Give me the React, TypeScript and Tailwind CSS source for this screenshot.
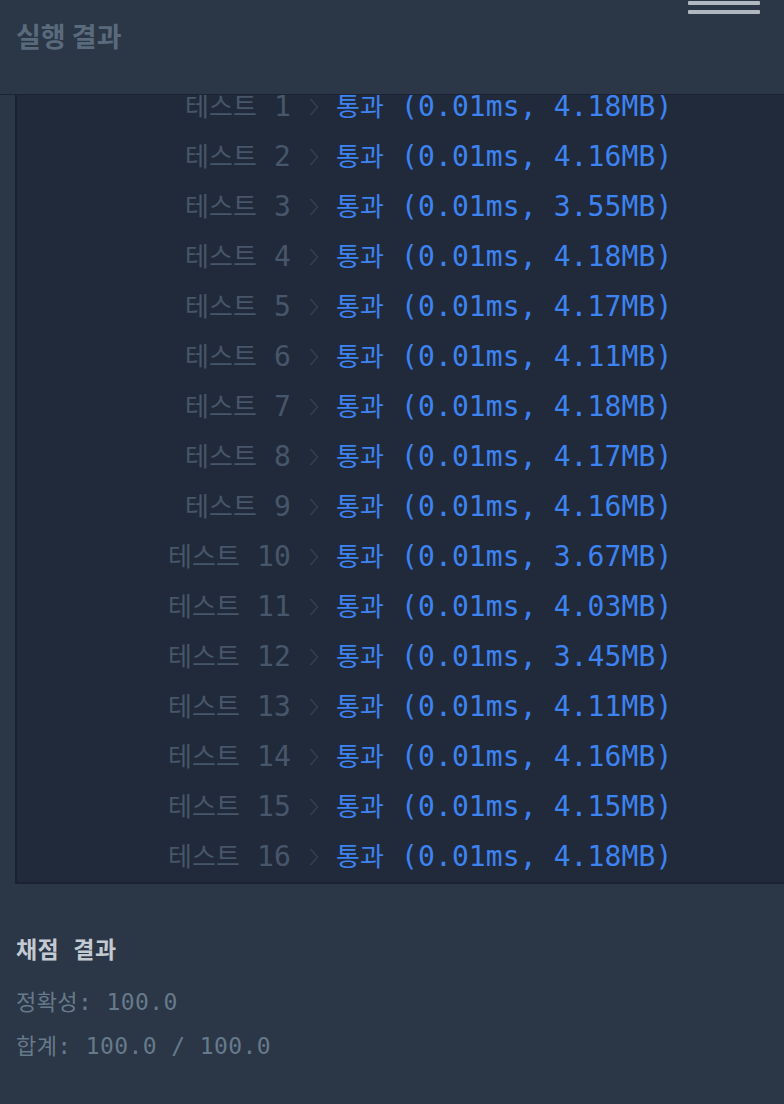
import React from "react";

const results = [
  { n: 1, ms: "0.01ms", mb: "4.18MB" },
  { n: 2, ms: "0.01ms", mb: "4.16MB" },
  { n: 3, ms: "0.01ms", mb: "3.55MB" },
  { n: 4, ms: "0.01ms", mb: "4.18MB" },
  { n: 5, ms: "0.01ms", mb: "4.17MB" },
  { n: 6, ms: "0.01ms", mb: "4.11MB" },
  { n: 7, ms: "0.01ms", mb: "4.18MB" },
  { n: 8, ms: "0.01ms", mb: "4.17MB" },
  { n: 9, ms: "0.01ms", mb: "4.16MB" },
  { n: 10, ms: "0.01ms", mb: "3.67MB" },
  { n: 11, ms: "0.01ms", mb: "4.03MB" },
  { n: 12, ms: "0.01ms", mb: "3.45MB" },
  { n: 13, ms: "0.01ms", mb: "4.11MB" },
  { n: 14, ms: "0.01ms", mb: "4.16MB" },
  { n: 15, ms: "0.01ms", mb: "4.15MB" },
  { n: 16, ms: "0.01ms", mb: "4.18MB" },
];

const mono = "font-['DejaVu_Sans_Mono','Noto_Sans_CJK_KR',monospace]";

function Chevron() {
  return (
    <svg width="12" height="20" viewBox="0 0 12 20" fill="none" className="shrink-0">
      <path d="M2.5 2 L9.5 10 L2.5 18" stroke="#35414f" strokeWidth="1.4" />
    </svg>
  );
}

export default function App() {
  return (
    <div className="w-[784px] h-[1104px] overflow-hidden bg-[#2b3646] flex flex-col">
      {/* header */}
      <div className="h-[95px] shrink-0 flex justify-between border-b border-[#1b2332]">
        <h2 className="pl-4 pt-[17px] text-[27px] font-bold text-[#5a6a7d] font-['Noto_Sans_CJK_KR',sans-serif] leading-[38px]">
          실행 결과
        </h2>
        <div className="flex flex-col gap-[5px] pt-[1px] pr-6">
          <div className="w-[72px] h-[4px] bg-[#aeb8be] rounded-[1px]" />
          <div className="w-[72px] h-[4px] bg-[#aeb8be] rounded-[1px]" />
        </div>
      </div>

      {/* result panel */}
      <div className="ml-[15px] h-[789px] shrink-0 overflow-hidden bg-[#212a3a] border-l-2 border-b-2 border-[#1a2231]">
        <div className={`-mt-[13px] ${mono} text-[28px] tracking-[0.1px]`}>
          {results.map((r) => (
            <div key={r.n} className="flex h-[50px] items-center">
              <div className="w-[274px] text-right text-[#47566a] whitespace-pre">
                <span className="text-[26px]">테스트</span> {r.n}
              </div>
              <div className="w-[45px] flex justify-center">
                <Chevron />
              </div>
              <div className="text-[#3d83f2] whitespace-pre">
                <span className="text-[26px]">통과</span> ({r.ms}, {r.mb})
              </div>
            </div>
          ))}
        </div>
      </div>

      {/* grading */}
      <div className={`pl-4 pt-[50px] ${mono} text-[23px] tracking-[0.4px]`}>
        <div className="text-[#c3cad2] font-bold leading-[32px] whitespace-pre">채점 결과</div>
        <div className="mt-[20px] text-[#667a8c] leading-[32px] whitespace-pre">
          <span className="text-[22px]">정확성</span>: 100.0
        </div>
        <div className="mt-[11px] text-[#667a8c] leading-[32px] whitespace-pre">
          <span className="text-[22px]">합계</span>: 100.0 / 100.0
        </div>
      </div>
    </div>
  );
}
